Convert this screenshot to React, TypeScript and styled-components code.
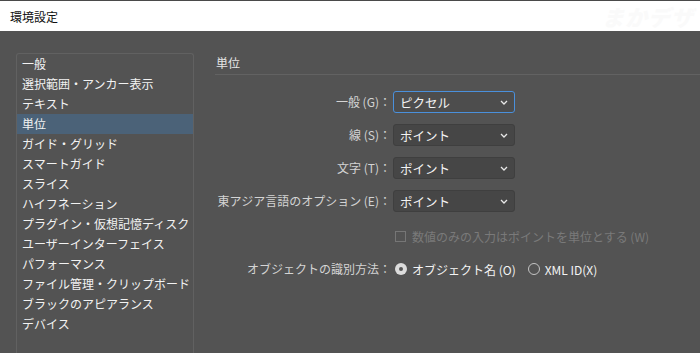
import React from "react";
import styled, { createGlobalStyle } from "styled-components";

const GlobalStyle = createGlobalStyle`
  html, body { margin: 0; padding: 0; background: #535353; }
  body {
    font-family: "Noto Sans CJK JP", "Noto Sans", "Liberation Sans", sans-serif;
    font-size: 12px;
    -webkit-font-smoothing: antialiased;
  }
`;

const Window = styled.div`
  width: 700px;
  height: 353px;
  display: flex;
  flex-direction: column;
  overflow: hidden;
  background: #535353;
`;

const TitleBar = styled.div`
  height: 30px;
  flex: 0 0 30px;
  border-top: 1px solid #4a4a4a;
  background: #ffffff;
  display: flex;
  align-items: center;
  justify-content: space-between;
  padding: 0 0 0 10px;
  color: #111;
  font-size: 12px;
`;

const Watermark = styled.span`
  color: #fafafa;
  font-weight: 900;
  font-style: italic;
  font-size: 22px;
  letter-spacing: 1px;
  padding-right: 6px;
`;

const Body = styled.div`
  flex: 1;
  display: flex;
  padding: 22px 0 0 16px;
  min-height: 0;
`;

const Sidebar = styled.ul`
  list-style: none;
  margin: 0;
  padding: 0;
  width: 176px;
  flex: 0 0 176px;
  border: 1px solid #616161;
  border-bottom: none;
  border-radius: 3px 3px 0 0;
`;

const SideItem = styled.li<{ $active?: boolean }>`
  height: 20px;
  line-height: 20px;
  padding-left: 5px;
  color: #f2f2f2;
  white-space: nowrap;
  background: ${(p) => (p.$active ? "#4b6278" : "transparent")};
`;

const Main = styled.div`
  flex: 1;
  margin-left: 21px;
  display: flex;
  flex-direction: column;
`;

const SectionHeader = styled.div`
  height: 21px;
  line-height: 19px;
  border-bottom: 1px solid #626262;
  color: #e6e6e6;
  padding-left: 1px;
`;

const Form = styled.div`
  display: grid;
  grid-template-columns: 178px auto;
  row-gap: 11px;
  margin-top: 16px;
  align-items: center;
`;

const Label = styled.div`
  text-align: right;
  color: #d4d4d4;
  padding-right: 2px;
  white-space: nowrap;
  line-height: 22px;
`;

const Select = styled.div<{ $focused?: boolean }>`
  width: 122px;
  height: 22px;
  box-sizing: border-box;
  border: 1px solid ${(p) => (p.$focused ? "#4a90dc" : "#3f3f3f")};
  border-radius: 3px;
  background: ${(p) => (p.$focused ? "#4d4d4d" : "#464646")};
  color: #f4f4f4;
  display: flex;
  align-items: center;
  justify-content: space-between;
  padding: 0 6px 0 6px;
  font-size: 12.5px;
`;

const Chevron = () => (
  <svg width="8" height="5" viewBox="0 0 8 5">
    <polyline points="1,1 4,4 7,1" fill="none" stroke="#e8e8e8" strokeWidth="1.3" />
  </svg>
);

const Empty = styled.div``;

const CheckRow = styled.div`
  display: flex;
  align-items: center;
  gap: 6px;
  color: #7a7a7a;
  height: 22px;
  margin-top: 2px;
  padding-left: 2px;
  white-space: nowrap;
`;

const CheckBox = styled.span`
  width: 9px;
  height: 9px;
  border: 1px solid #767676;
  display: inline-block;
`;

const RadioGroup = styled.div`
  display: flex;
  align-items: center;
  height: 22px;
  padding-left: 2px;
  white-space: nowrap;
`;

const RadioOption = styled.label`
  display: flex;
  align-items: center;
  gap: 5px;
  color: #f4f4f4;
  margin-right: 12px;
`;

const RadioDot = styled.span<{ $checked?: boolean }>`
  width: 12px;
  height: 12px;
  box-sizing: border-box;
  border-radius: 50%;
  display: inline-flex;
  align-items: center;
  justify-content: center;
  background: ${(p) => (p.$checked ? "#dcdcdc" : "transparent")};
  border: ${(p) => (p.$checked ? "none" : "1.5px solid #c4c4c4")};
  &::after {
    content: "";
    display: ${(p) => (p.$checked ? "block" : "none")};
    width: 4px;
    height: 4px;
    border-radius: 50%;
    background: #555;
  }
`;

const sideItems = [
  "一般",
  "選択範囲・アンカー表示",
  "テキスト",
  "単位",
  "ガイド・グリッド",
  "スマートガイド",
  "スライス",
  "ハイフネーション",
  "プラグイン・仮想記憶ディスク",
  "ユーザーインターフェイス",
  "パフォーマンス",
  "ファイル管理・クリップボード",
  "ブラックのアピアランス",
  "デバイス",
];

const selects = [
  { label: "一般 (G)：", value: "ピクセル", focused: true },
  { label: "線 (S)：", value: "ポイント" },
  { label: "文字 (T)：", value: "ポイント" },
  { label: "東アジア言語のオプション (E)：", value: "ポイント" },
];

export default function App() {
  return (
    <>
      <GlobalStyle />
      <Window>
        <TitleBar>
          <span>環境設定</span>
          <Watermark>まかデザ</Watermark>
        </TitleBar>
        <Body>
          <Sidebar>
            {sideItems.map((s) => (
              <SideItem key={s} $active={s === "単位"}>
                {s}
              </SideItem>
            ))}
          </Sidebar>
          <Main>
            <SectionHeader>単位</SectionHeader>
            <Form>
              {selects.map((s) => (
                <React.Fragment key={s.label}>
                  <Label>{s.label}</Label>
                  <Select $focused={s.focused}>
                    <span>{s.value}</span>
                    <Chevron />
                  </Select>
                </React.Fragment>
              ))}
              <Empty />
              <CheckRow>
                <CheckBox />
                <span>数値のみの入力はポイントを単位とする (W)</span>
              </CheckRow>
              <Label>オブジェクトの識別方法：</Label>
              <RadioGroup>
                <RadioOption>
                  <RadioDot $checked />
                  <span>オブジェクト名 (O)</span>
                </RadioOption>
                <RadioOption>
                  <RadioDot />
                  <span>XML ID(X)</span>
                </RadioOption>
              </RadioGroup>
            </Form>
          </Main>
        </Body>
      </Window>
    </>
  );
}
